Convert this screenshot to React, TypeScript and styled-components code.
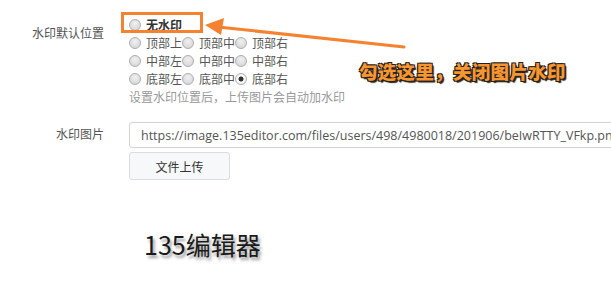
import styled, { createGlobalStyle } from "styled-components";

const GlobalStyle = createGlobalStyle`
  html, body {
    margin: 0;
    padding: 0;
    background: #fff;
  }
  body {
    font-family: "Noto Sans CJK SC", "Noto Sans", sans-serif;
    font-size: 12px;
    color: #555;
  }
`;

const positions = [
  ["顶部上", "顶部中", "顶部右"],
  ["中部左", "中部中", "中部右"],
  ["底部左", "底部中", "底部右"],
];

const checked = "底部右";

const App = () => (
  <>
    <GlobalStyle />
    <Page>
      <Form>
        <Label $top={24}>水印默认位置</Label>
        <Options>
          <FirstLine>
            <Option $boxed>
              <Radio />
              <strong>无水印</strong>
            </Option>
          </FirstLine>
          {positions.map((row) => (
            <Line key={row[0]}>
              {row.map((name) => (
                <Option key={name}>
                  <Radio $checked={name === checked} />
                  {name}
                </Option>
              ))}
            </Line>
          ))}
          <Help>设置水印位置后，上传图片会自动加水印</Help>
        </Options>

        <Label $top={18}>水印图片</Label>
        <Upload>
          <UrlInput
            readOnly
            value="https://image.135editor.com/files/users/498/4980018/201906/beIwRTTY_VFkp.png"
          />
          <UploadButton>文件上传</UploadButton>
        </Upload>
      </Form>

      <Brand>135编辑器</Brand>

      <Arrow width="611" height="284" viewBox="0 0 611 284">
        <line x1="404" y1="47" x2="218" y2="27" stroke="#f5822f" strokeWidth="3" strokeLinecap="round" />
        <polygon points="205,25 224,18 221,35" fill="#f5822f" />
      </Arrow>
      <Note>勾选这里，关闭图片水印</Note>
    </Page>
  </>
);

export default App;

const Page = styled.div`
  position: relative;
  width: 611px;
  height: 284px;
  overflow: hidden;
`;

const Form = styled.div`
  display: grid;
  grid-template-columns: 104px 1fr;
  column-gap: 25px;
  padding-top: 15px;
`;

const Label = styled.div<{ $top: number }>`
  text-align: right;
  line-height: 18px;
  padding-top: ${(p) => p.$top - 15}px;
  color: #555;
  white-space: nowrap;
`;

const Options = styled.div`
  display: flex;
  flex-direction: column;
`;

const FirstLine = styled.div`
  display: flex;
  height: 19px;
  line-height: 19px;
`;

const Line = styled.div`
  display: flex;
  height: 18px;
  line-height: 18px;
`;

const Option = styled.label<{ $boxed?: boolean }>`
  position: relative;
  display: flex;
  align-items: center;
  color: #555;
  white-space: nowrap;
  margin-right: 0;

  strong {
    font-weight: 700;
    color: #333;
  }

  ${(p) =>
    p.$boxed &&
    `
    &::after {
      content: "";
      position: absolute;
      left: -8px;
      top: -3px;
      box-sizing: border-box;
      width: 82px;
      height: 21px;
      border: 3px solid #f5822f;
    }
  `}
`;

const Radio = styled.span<{ $checked?: boolean }>`
  display: inline-block;
  box-sizing: border-box;
  width: 12px;
  height: 12px;
  border-radius: 50%;
  border: 1px solid #aeaeae;
  margin-right: 5px;
  background: ${(p) =>
    p.$checked
      ? "radial-gradient(circle, #333 0 2.2px, #f4f4f4 2.8px)"
      : "radial-gradient(circle at 50% 35%, #f0f0f0, #d2d2d2)"};
`;

const Help = styled.div`
  line-height: 18px;
  color: #9a9a9a;
  white-space: nowrap;
  margin-bottom: 16px;
`;

const Upload = styled.div`
  display: flex;
  flex-direction: column;
  align-items: flex-start;
  gap: 4px;
`;

const UrlInput = styled.input`
  box-sizing: border-box;
  width: 520px;
  height: 26px;
  padding: 0 11px;
  border: 1px solid #d4d4d4;
  border-radius: 3px;
  font-family: "Open Sans", "Noto Sans", sans-serif;
  font-size: 12.5px;
  color: #555;
  outline: none;
`;

const UploadButton = styled.button`
  box-sizing: border-box;
  width: 101px;
  height: 28px;
  border: 1px solid #dcdcdc;
  border-radius: 3px;
  background: #f7f8fa;
  font-family: "Noto Sans CJK SC", sans-serif;
  font-size: 12px;
  color: #333;
`;

const Brand = styled.div`
  margin: 46px 0 0 144px;
  font-family: "Noto Sans CJK SC", sans-serif;
  font-size: 25px;
  font-weight: 400;
  color: #1a1a1a;
  text-shadow: 2px 3px 3px rgba(0, 0, 0, 0.4);
  line-height: 36px;
`;

const Arrow = styled.svg`
  position: absolute;
  left: 0;
  top: 0;
  pointer-events: none;
`;

const Note = styled.div`
  position: absolute;
  left: 359px;
  top: 59px;
  font-family: "Noto Sans CJK SC", sans-serif;
  font-size: 18.5px;
  font-weight: 900;
  line-height: 24px;
  color: #f7952f;
  letter-spacing: 0.3px;
  text-shadow: -1px -1px 0 #222, 1px -1px 0 #222, -1px 1px 0 #222, 1px 1px 0 #222,
    2px 2px 1px #222;
  white-space: nowrap;
`;
